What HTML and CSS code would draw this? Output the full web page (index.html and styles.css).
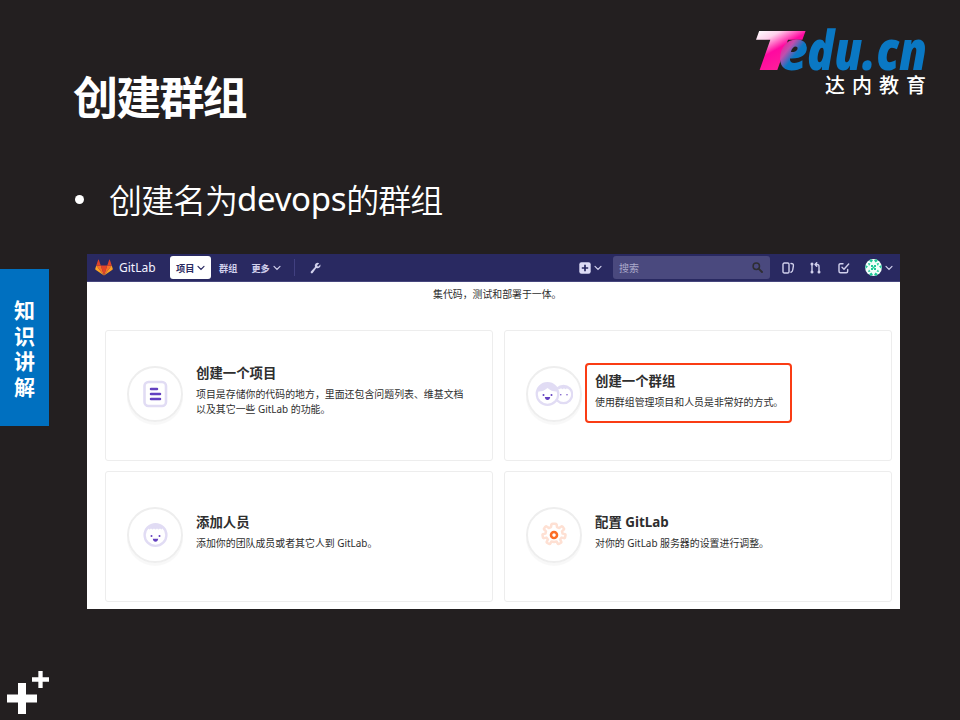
FILE: index.html
```html
<!DOCTYPE html>
<html lang="zh-CN">
<head>
<meta charset="utf-8">
<title>创建群组</title>
<link rel="stylesheet" href="styles.css">
</head>
<body>
<div class="slide">
  <header class="slide-header">
    <h1>创建群组</h1>
    <div class="brand">
      <svg class="brand-word" width="184" height="50" viewBox="0 0 184 50">
        <defs>
          <linearGradient id="t" gradientUnits="userSpaceOnUse" x1="14" y1="2" x2="34" y2="38">
            <stop offset="0" stop-color="#fff"/><stop offset=".28" stop-color="#ffd0eb"/><stop offset=".62" stop-color="#ff08a0"/><stop offset="1" stop-color="#ff1b9b"/>
          </linearGradient>
          <linearGradient id="e" gradientUnits="userSpaceOnUse" x1="34" y1="20" x2="52" y2="34">
            <stop offset="0" stop-color="#f21b9b"/><stop offset=".35" stop-color="#c04fae"/><stop offset=".75" stop-color="#0a78c4"/>
          </linearGradient>
        </defs>
        <text class="word" y="42" x="4" fill="url(#t)" textLength="51" lengthAdjust="spacingAndGlyphs">T</text>
        <text class="word" y="42" x="33" fill="url(#e)" textLength="30" lengthAdjust="spacingAndGlyphs">e</text>
        <text class="word" y="42" x="62" fill="#0a78c4" textLength="120" lengthAdjust="spacingAndGlyphs">du.cn</text>
      </svg>
      <div class="brand-cn">达内教育</div>
    </div>
  </header>
  <ul class="points"><li>创建名为<span>devops</span>的群组</li></ul>
  <main class="stage">
    <aside class="tab">知<br>识<br>讲<br>解</aside>
    <section class="app">
      <nav class="navbar">
        <svg class="fox" width="18" height="17" viewBox="0 0 36 34">
          <path fill="#e24329" d="M18 33 24.5 13h-13z"/><path fill="#fc6d26" d="M18 33 11.5 13H2.5zM18 33 24.500 13h9z"/><path fill="#fca326" d="M2.500 13 .5 19.500q-.3 1.100.6 1.800L18 33zM33.500 13l2 6.500q.3 1.100-.6 1.800L18 33z"/><path fill="#e24329" d="M2.500 13h9L7.600 1.500q-.6-1-1.200 0zM33.500 13h-9l3.900-11.500q.6-1 1.200 0z"/>
        </svg>
        <span class="wordmark">GitLab</span>
        <span class="pill">项目<svg class="chev" viewBox="0 0 8 6"><path d="m1 1.300 3 3 3-3"/></svg></span>
        <span class="link groups">群组</span>
        <span class="link">更多<svg class="chev" viewBox="0 0 8 6"><path d="m1 1.300 3 3 3-3"/></svg></span>
        <i class="divider"></i>
        <svg class="wrench" width="11" height="12" viewBox="0 0 11 12"><path d="M9.200 1.200 7.200 3.200l.2 1 1 .2 2-2A3 3 0 0 1 6.300 6L2.700 10.900a1.150 1.150 0 0 1-1.800-1.500L5 5A3 3 0 0 1 9.200 1.200Z" fill="#d1d0ec"/></svg>
        <span class="spacer"></span>
        <svg width="12" height="12" viewBox="0 0 12 12"><rect x=".3" y=".3" width="11.400" height="11.400" rx="2.200" fill="#dddcf5"/><path d="M6 2.800v6.400M2.800 6h6.400" stroke="#292961" stroke-width="1.700"/></svg>
        <svg class="chev plus-chev" viewBox="0 0 8 6"><path d="m1 1.300 3 3 3-3"/></svg>
        <div class="search"><span>搜索</span><svg width="11" height="11" viewBox="0 0 11 11"><circle cx="4.300" cy="4.300" r="3.200" fill="none" stroke="#2e2e33" stroke-width="1.500"/><path d="m6.800 6.800 3.200 3.200" stroke="#2e2e33" stroke-width="1.900" stroke-linecap="round"/></svg></div>
        <svg class="ico issues" width="13" height="12" viewBox="0 0 13 12"><rect x="1" y="1" width="6" height="10" rx="1.300"/><path d="M9 1.500q2.700 0 2.400 2.300L10.700 8q-.2 1.800-1.700 2.200"/></svg>
        <svg class="ico mr" width="11" height="12" viewBox="0 0 11 12"><path d="M2 3v6M9 9V4.500Q9 2.500 7 2.500H5M6.700.8 5 2.500l1.700 1.700"/><circle cx="2" cy="2" r=".8"/><circle cx="2" cy="10" r=".8"/><circle cx="9" cy="10" r=".8"/></svg>
        <svg class="ico todo" width="12" height="12" viewBox="0 0 12 12"><path d="M5 1.700H2.500Q1 1.700 1 3.200v6Q1 10.700 2.500 10.700h5.700q1.500 0 1.500-1.500V7.500M4 5.200l2 2L10.700 2"/></svg>
        <svg class="avatar" width="17" height="17" viewBox="0 0 17 17"><circle cx="8.500" cy="8.500" r="8.400" fill="#f2fffa"/><g fill="#20c997"><path d="M5.200 0 8 1.200 6.500 3.500 4.300 2zM11.800 0 9 1.200l1.500 2.300L12.700 2zM5.200 17 8 15.800l-1.500-2.300L4.300 15zM11.800 17 9 15.800l1.500-2.300 2.200 1.500zM.5 6l2.500 1.500L.5 10zM16.500 6 14 7.500l2.500 2.500zM3 4l2.500.5L4 7zM14 4l-2.500.5L13 7zM3 13l2.500-.5L4 10.500zM14 13l-2.500-.5 1.500-2z"/><path d="M6 6h2v2H6zM9 6h2v2H9zM6 9h2v2H6zM9 9h2v2H9zM7.500 7.500h2v2h-2z"/></g></svg>
        <svg class="chev" viewBox="0 0 8 6"><path d="m1 1.300 3 3 3-3"/></svg>
      </nav>
      <p class="lead">集代码，测试和部署于一体。</p>
      <div class="cards">
        <article class="card">
          <div class="disc"><svg width="25" height="28" viewBox="0 0 25 28"><rect x="1.500" y="2" width="21.500" height="24" rx="4" fill="#fff" stroke="#e1dcf4" stroke-width="2.600"/><path d="M8 9h6M8 14h9M8 19h9" stroke="#6340c0" stroke-width="2.500" stroke-linecap="round"/></svg></div>
          <div class="copy"><h2>创建一个项目</h2><p>项目是存储你的代码的地方，里面还包含问题列表、维基文档<br>以及其它一些 GitLab 的功能。</p></div>
        </article>
        <article class="card">
          <div class="disc"><svg width="38" height="26" viewBox="0 0 38 26"><g fill="#fff" stroke="#e1dcf4" stroke-width="2.200"><circle cx="28.500" cy="13.500" r="8.700"/><circle cx="12.500" cy="13" r="10.800"/></g><path d="M2.500 10.500Q8 11 12.500 7q4.500 4 10 3.500Q20 2 12.500 2t-10 8.500ZM22.500 7.500l2 .8 1.500-1 1.500 1 1.500-1 1.500 1 1.500-1 1.500 1L36 8.500Q33 5 28.500 4.800 24.500 5 22.500 7.500Z" fill="#e1dcf4"/><g fill="#6340c0"><circle cx="8.500" cy="14" r="1"/><circle cx="16.500" cy="14" r="1"/><path d="M9.800 16h5.400q-.4 3-2.700 3t-2.700-3Z"/><circle cx="25.800" cy="13.800" r=".7"/><circle cx="32" cy="13.800" r=".7"/></g></svg></div>
          <div class="copy"><h2>创建一个群组</h2><p>使用群组管理项目和人员是非常好的方式。</p><i class="callout"></i></div>
        </article>
        <article class="card">
          <div class="disc"><svg width="25" height="26" viewBox="0 0 25 26"><circle cx="12.500" cy="13" r="10.900" fill="#fff" stroke="#e1dcf4" stroke-width="2.400"/><path d="m5 6.500 1.500 1 1.500-1 1.500 1 1.500-1 1.500 1 1.500-1 1.500 1 1.500-1 1.500 1L20 6q-3-3.500-7.500-3.500T5 6.500Z" fill="#e1dcf4"/><g fill="#6340c0"><circle cx="8.500" cy="14" r="1"/><circle cx="16.500" cy="14" r="1"/><path d="M9.800 16.800h5.400q-.4 3-2.700 3t-2.700-3Z"/></g></svg></div>
          <div class="copy"><h2>添加人员</h2><p>添加你的团队成员或者其它人到 GitLab。</p></div>
        </article>
        <article class="card">
          <div class="disc"><svg width="26" height="26" viewBox="-13 -13 26 26"><path fill="#fff" stroke="#fee0d3" stroke-width="2.500" stroke-linejoin="round" d="M-1.500-11.200h3q1 0 1.100 1L3-7.900 5.200-6.900 7-8.400q.8-.7 1.500 0l1.300 1.600q.7.800-.1 1.500L8-3.700 8.500-1.400l2.200.5q1 .2.800 1.200L11.100 2.300q-.2 1-1.200.8L7.600 2.600 6.100 4.500 7.200 6.600q.4.900-.5 1.400L4.900 8.900q-.9.400-1.300-.5L2.500 6.400 0 7-2.500 6.400-3.600 8.400q-.4.900-1.300.5L-6.700 8q-.9-.5-.5-1.400L-6.100 4.500-7.600 2.600-9.900 3.100q-1 .2-1.200-.8L-11.500.3q-.2-1 .8-1.200l2.200-.5L-8-3.700-9.700-5.300q-.8-.7-.1-1.500L-8.500-8.400q.7-.7 1.500 0l1.800 1.500L-3-7.900l.4-2.300q.1-1 1.100-1Z"/><circle r="3" fill="#fff" stroke="#fc6d26" stroke-width="2.600"/></svg></div>
          <div class="copy"><h2>配置 GitLab</h2><p>对你的 GitLab 服务器的设置进行调整。</p></div>
        </article>
      </div>
    </section>
  </main>
  <footer><svg width="52" height="52" viewBox="0 0 52 52"><path d="M22 20v31M7 35.500h30" stroke="#fff" stroke-width="8"/><path d="M40.500 8v17M32 16.500h17" stroke="#fff" stroke-width="4.300"/></svg></footer>
</div>
</body>
</html>
```
FILE: styles.css
```css
* { box-sizing: border-box; }
body, h1, h2, p, ul { margin: 0; padding: 0; }
body { font-family: "Noto Sans", "Noto Sans CJK SC", sans-serif; }
svg { display: block; flex: none; }
.slide { width: 960px; height: 720px; overflow: hidden; background: #231f20; color: #fff; display: flex; flex-direction: column; }
.slide-header { height: 170px; padding: 0 31px 0 73px; display: flex; justify-content: space-between; }
h1 { padding-top: 63px; font: 700 45px/65px "Noto Sans CJK SC", sans-serif; letter-spacing: -1.800px; }
.brand { width: 184px; padding-top: 28px; display: flex; flex-direction: column; }
.word { font: italic 800 54px "Open Sans", sans-serif; }
.brand-cn { margin: -7px 0 0 80px; font: 500 20px/28px "Noto Sans CJK SC", sans-serif; letter-spacing: 7px; white-space: nowrap; }
.points { height: 84px; padding: 5px 0 0 75px; list-style: none; font: 300 33px/48px "Noto Sans", "Noto Sans CJK SC", sans-serif; letter-spacing: -1px; }
.points li { display: flex; align-items: center; font-family: "Noto Sans CJK SC", sans-serif; font-weight: 350; }
.points li::before { content: ""; width: 9px; height: 9px; margin-right: 25px; border-radius: 50%; background: #fff; }
.points span { font-family: "Noto Sans", sans-serif; font-weight: 400; letter-spacing: -.3px; }
.stage { display: flex; height: 355px; }
.tab { width: 49px; height: 157px; margin: 15px 38px 0 0; padding-top: 28px; background: #0070c0; text-align: center; font: 700 21px/25.500px "Noto Sans CJK SC", sans-serif; }
.app { width: 813px; height: 355px; background: #fff; color: #2e2e2e; }
.navbar { height: 28px; padding: 0 7px 0 8px; display: flex; align-items: center; background: #292961; border-bottom: 1px solid #46467d; color: #d1d0ec; }
.fox { margin-right: 6px; }
.wordmark { width: 51px; color: #f4f3ff; font-size: 12px; }
.pill { width: 41px; height: 23px; padding-left: 6px; display: flex; align-items: center; border-radius: 3px; background: #fff; color: #292961; font-size: 9.200px; font-weight: 700; }
.link { display: flex; align-items: center; font-size: 9.200px; font-weight: 700; }
.groups { margin: 0 14px 0 8px; }
.chev { width: 8px; height: 6px; fill: none; stroke: currentColor; stroke-width: 1.200; stroke-linecap: round; }
.pill .chev, .link .chev { margin-left: 3px; }
.divider { width: 1px; height: 17px; margin: 0 15px 0 13px; background: #414080; }
.spacer { flex: 1; }
.plus-chev { margin: 0 11px 0 3px; }
.search { width: 157px; height: 23px; padding: 0 7px 0 6px; display: flex; align-items: center; justify-content: space-between; border-radius: 3px; background: #4a497e; color: #aaa9ca; font-size: 10px; }
.ico { fill: none; stroke: #d1d0ec; stroke-width: 1.400; stroke-linecap: round; stroke-linejoin: round; }
.issues { margin-left: 12px; }
.mr { margin-left: 15px; }
.todo { margin-left: 17px; }
.avatar { margin: 0 3px 0 15px; }
.lead { height: 48px; padding: 5px 0 0 346px; font-size: 9.900px; line-height: 15px; white-space: nowrap; }
.cards { display: grid; grid-template-columns: 388px 388px; grid-auto-rows: 131px; gap: 10px 11px; padding-left: 18px; }
.card { display: flex; align-items: center; padding-left: 21px; border: 1px solid #ededed; border-radius: 3px; }
.disc { width: 56px; height: 56px; flex: none; display: flex; align-items: center; justify-content: center; border: 2px solid #eee; border-radius: 50%; box-shadow: 0 3px 1px #f8f8f8; margin-top: -3px; }
.copy { position: relative; margin: -10px 0 0 13px; white-space: nowrap; }
h2 { font-size: 13.400px; line-height: 18px; font-weight: 700; margin-bottom: 5px; }
.copy p { font-size: 9.920px; line-height: 15px; }
.callout { position: absolute; left: -10px; top: -9px; width: 207px; height: 60px; border: 2px solid #fa3c14; border-radius: 4px; }
footer { padding-top: 54px; }
```
